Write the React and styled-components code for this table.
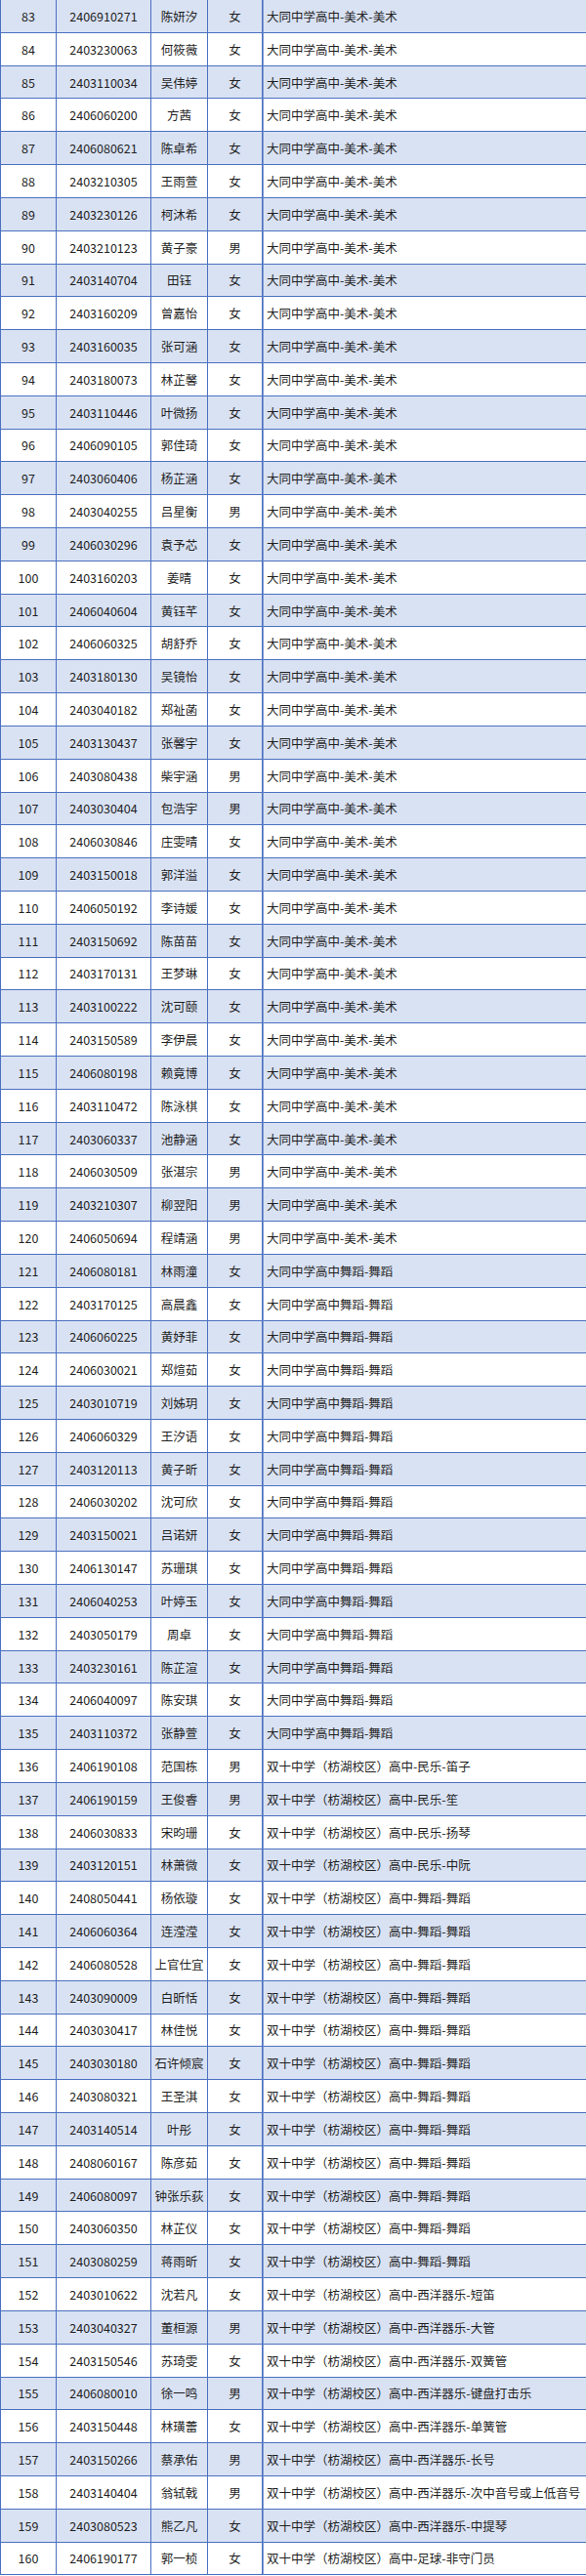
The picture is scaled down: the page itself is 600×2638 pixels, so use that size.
import React from 'react'
import styled, { createGlobalStyle } from 'styled-components'

const GlobalStyle = createGlobalStyle`
  html, body {
    margin: 0;
    padding: 0;
    background: #ffffff;
  }
  body {
    overflow: hidden;
    font-family: "Noto Sans CJK SC", "Noto Sans", sans-serif;
  }
`

const Sheet = styled.div`
  display: grid;
  grid-template-columns: 57px 97px 58px 56px 334px;
  grid-auto-rows: 33.82px;
  width: 602px;
  border-left: 1px solid #4a70c0;
  box-sizing: border-box;
  color: #1f1f1f;
  font-size: 12.5px;
`

const Cell = styled.div`
  display: flex;
  align-items: center;
  justify-content: ${(p) => (p.$left ? 'flex-start' : 'center')};
  padding-left: ${(p) => (p.$left ? '3px' : '0')};
  box-sizing: border-box;
  background: ${(p) => (p.$alt ? '#d9e2f3' : '#ffffff')};
  border-right: 1px solid #4a70c0;
  border-bottom: 1px solid #4a70c0;
  border-left: ${(p) => (p.$left ? '1px solid #7e97cf' : 'none')};
  white-space: nowrap;
  overflow: hidden;
`

const MEISHU = '大同中学高中-美术-美术'
const WUDAO = '大同中学高中舞蹈-舞蹈'
const SZ = '双十中学（枋湖校区）高中-'

const rows = [
  ['2406910271', '陈妍汐', '女', MEISHU],
  ['2403230063', '何筱薇', '女', MEISHU],
  ['2403110034', '吴伟婷', '女', MEISHU],
  ['2406060200', '方茜', '女', MEISHU],
  ['2406080621', '陈卓希', '女', MEISHU],
  ['2403210305', '王雨萱', '女', MEISHU],
  ['2403230126', '柯沐希', '女', MEISHU],
  ['2403210123', '黄子豪', '男', MEISHU],
  ['2403140704', '田钰', '女', MEISHU],
  ['2403160209', '曾嘉怡', '女', MEISHU],
  ['2403160035', '张可涵', '女', MEISHU],
  ['2403180073', '林芷馨', '女', MEISHU],
  ['2403110446', '叶微扬', '女', MEISHU],
  ['2406090105', '郭佳琦', '女', MEISHU],
  ['2403060406', '杨芷涵', '女', MEISHU],
  ['2403040255', '吕星衡', '男', MEISHU],
  ['2406030296', '袁予芯', '女', MEISHU],
  ['2403160203', '姜晴', '女', MEISHU],
  ['2406040604', '黄钰芊', '女', MEISHU],
  ['2406060325', '胡舒乔', '女', MEISHU],
  ['2403180130', '吴镜怡', '女', MEISHU],
  ['2403040182', '郑祉菡', '女', MEISHU],
  ['2403130437', '张馨宇', '女', MEISHU],
  ['2403080438', '柴宇涵', '男', MEISHU],
  ['2403030404', '包浩宇', '男', MEISHU],
  ['2406030846', '庄雯晴', '女', MEISHU],
  ['2403150018', '郭洋溢', '女', MEISHU],
  ['2406050192', '李诗媛', '女', MEISHU],
  ['2403150692', '陈苗苗', '女', MEISHU],
  ['2403170131', '王梦琳', '女', MEISHU],
  ['2403100222', '沈可颐', '女', MEISHU],
  ['2403150589', '李伊晨', '女', MEISHU],
  ['2406080198', '赖竟博', '女', MEISHU],
  ['2403110472', '陈泳棋', '女', MEISHU],
  ['2403060337', '池静涵', '女', MEISHU],
  ['2406030509', '张湛宗', '男', MEISHU],
  ['2403210307', '柳翌阳', '男', MEISHU],
  ['2406050694', '程靖涵', '男', MEISHU],
  ['2406080181', '林雨潼', '女', WUDAO],
  ['2403170125', '高晨鑫', '女', WUDAO],
  ['2406060225', '黄妤菲', '女', WUDAO],
  ['2406030021', '郑煊茹', '女', WUDAO],
  ['2403010719', '刘姊玥', '女', WUDAO],
  ['2406060329', '王汐语', '女', WUDAO],
  ['2403120113', '黄子昕', '女', WUDAO],
  ['2406030202', '沈可欣', '女', WUDAO],
  ['2403150021', '吕诺妍', '女', WUDAO],
  ['2406130147', '苏珊琪', '女', WUDAO],
  ['2406040253', '叶婷玉', '女', WUDAO],
  ['2403050179', '周卓', '女', WUDAO],
  ['2403230161', '陈芷渲', '女', WUDAO],
  ['2406040097', '陈安琪', '女', WUDAO],
  ['2403110372', '张静萱', '女', WUDAO],
  ['2406190108', '范国栋', '男', SZ + '民乐-笛子'],
  ['2406190159', '王俊睿', '男', SZ + '民乐-笙'],
  ['2406030833', '宋昀珊', '女', SZ + '民乐-扬琴'],
  ['2403120151', '林萧微', '女', SZ + '民乐-中阮'],
  ['2408050441', '杨依璇', '女', SZ + '舞蹈-舞蹈'],
  ['2406060364', '连滢滢', '女', SZ + '舞蹈-舞蹈'],
  ['2406080528', '上官仕宜', '女', SZ + '舞蹈-舞蹈'],
  ['2403090009', '白昕恬', '女', SZ + '舞蹈-舞蹈'],
  ['2403030417', '林佳悦', '女', SZ + '舞蹈-舞蹈'],
  ['2403030180', '石许倾宸', '女', SZ + '舞蹈-舞蹈'],
  ['2403080321', '王圣淇', '女', SZ + '舞蹈-舞蹈'],
  ['2403140514', '叶彤', '女', SZ + '舞蹈-舞蹈'],
  ['2408060167', '陈彦茹', '女', SZ + '舞蹈-舞蹈'],
  ['2406080097', '钟张乐荻', '女', SZ + '舞蹈-舞蹈'],
  ['2403060350', '林芷仪', '女', SZ + '舞蹈-舞蹈'],
  ['2403080259', '蒋雨昕', '女', SZ + '舞蹈-舞蹈'],
  ['2403010622', '沈若凡', '女', SZ + '西洋器乐-短笛'],
  ['2403040327', '董桓源', '男', SZ + '西洋器乐-大管'],
  ['2403150546', '苏琦雯', '女', SZ + '西洋器乐-双簧管'],
  ['2406080010', '徐一鸣', '男', SZ + '西洋器乐-键盘打击乐'],
  ['2403150448', '林璜蕾', '女', SZ + '西洋器乐-单簧管'],
  ['2403150266', '蔡承佑', '男', SZ + '西洋器乐-长号'],
  ['2403140404', '翁轼戟', '男', SZ + '西洋器乐-次中音号或上低音号'],
  ['2403080523', '熊乙凡', '女', SZ + '西洋器乐-中提琴'],
  ['2406190177', '郭一桢', '女', SZ + '足球-非守门员'],
]

export default function App() {
  return (
    <>
      <GlobalStyle />
      <Sheet>
        {rows.map((r, i) => {
          const alt = i % 2 === 0
          return (
            <React.Fragment key={i}>
              <Cell $alt={alt}>{83 + i}</Cell>
              <Cell $alt={alt}>{r[0]}</Cell>
              <Cell $alt={alt}>{r[1]}</Cell>
              <Cell $alt={alt}>{r[2]}</Cell>
              <Cell $alt={alt} $left>{r[3]}</Cell>
            </React.Fragment>
          )
        })}
      </Sheet>
    </>
  )
}
